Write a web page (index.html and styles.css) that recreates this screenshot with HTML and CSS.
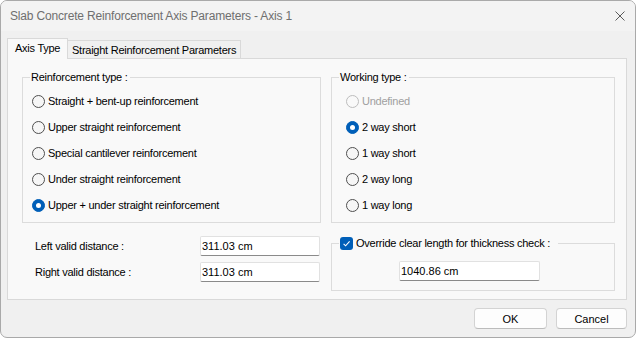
FILE: index.html
```html
<!DOCTYPE html>
<html>
	<head>
		<meta charset="UTF-8">
		<title>Slab Concrete Reinforcement Axis Parameters - Axis 1</title>
		<link rel="stylesheet" href="styles.css">
	</head>
	<body>
		<div class="window">
			<div class="titlebar">
				<span class="title">Slab Concrete Reinforcement Axis Parameters - Axis 1</span>
				<svg class="close" width="10" height="10" viewBox="0 0 10 10"><path d="M0.5 0.5L9.5 9.5M9.5 0.5L0.5 9.5" stroke="#5a5a5a" stroke-width="1" fill="none"/></svg>
			</div>
			<div class="client">
				<div class="tabs">
					<div class="tab active">Axis Type</div>
					<div class="tab">Straight Reinforcement Parameters</div>
				</div>
				<div class="panel">
					<div class="grid">
						<fieldset class="group">
							<legend>Reinforcement type :</legend>
							<div class="options">
								<div class="option"><span class="radio"></span>Straight + bent-up reinforcement</div>
								<div class="option"><span class="radio"></span>Upper straight reinforcement</div>
								<div class="option"><span class="radio"></span>Special cantilever reinforcement</div>
								<div class="option"><span class="radio"></span>Under straight reinforcement</div>
								<div class="option"><span class="radio on"></span>Upper + under straight reinforcement</div>
							</div>
						</fieldset>
						<fieldset class="group work">
							<legend>Working type :</legend>
							<div class="options">
								<div class="option disabled"><span class="radio"></span>Undefined</div>
								<div class="option"><span class="radio on"></span>2 way short</div>
								<div class="option"><span class="radio"></span>1 way short</div>
								<div class="option"><span class="radio"></span>2 way long</div>
								<div class="option"><span class="radio"></span>1 way long</div>
							</div>
						</fieldset>
						<div class="distances">
							<div class="field"><label>Left valid distance :</label><input class="input" type="text" value="311.03 cm"></div>
							<div class="field"><label>Right valid distance :</label><input class="input" type="text" value="311.03 cm"></div>
						</div>
						<fieldset class="group override">
							<legend><span class="check"><svg width="11" height="11" viewBox="0 0 11 11"><path d="M2.6 5.8L4.6 7.8L8.6 3.4" stroke="#fff" stroke-width="1.1" fill="none"/></svg></span>Override clear length for thickness check :</legend>
							<input class="input wide" type="text" value="1040.86 cm">
						</fieldset>
					</div>
				</div>
				<div class="buttons">
					<button class="btn">OK</button>
					<button class="btn cancel">Cancel</button>
				</div>
			</div>
		</div>
	</body>
</html>
```
FILE: styles.css
```css
*{margin: 0;padding: 0;box-sizing: border-box;}
body{background: #fff;color: #000;font: 11px "Liberation Sans", Arial, sans-serif;letter-spacing: -0.25px;}
.window{width: 636px;height: 338px;border: 1px solid #a9a9a9;border-radius: 7px;background: #f0f0f0;overflow: hidden;display: flex;flex-direction: column;}
.titlebar{height: 30px;flex: none;background: #f3f3f3;display: flex;align-items: center;justify-content: space-between;padding: 0 10px 0 9px;}
.title{font-size: 12px;letter-spacing: -0.17px;color: #6f6f6f;}
.client{flex: 1;padding: 7px 8px 0 6px;}
.tabs{display: flex;align-items: flex-end;height: 20px;}
.tab{width: 173px;height: 18px;padding: 2px 0 0 4px;line-height: 14px;white-space: nowrap;background: #f0f0f0;border: 1px solid #d9d9d9;border-left: none;border-bottom: none;}
.tab.active{width: 61px;height: 21px;margin-bottom: -1px;padding-left: 7px;background: #f9f9f9;border-left: 1px solid #d9d9d9;position: relative;z-index: 1;}
.panel{height: 242px;background: #f9f9f9;border: 1px solid #d9d9d9;padding: 11px 0 0 14px;}
.grid{display: grid;grid-template-columns: 299px 284px;column-gap: 10px;row-gap: 13px;align-items: start;}
.group{min-width: 0;border: 1px solid #dcdcdc;padding: 4px 0 4px 7px;}
.group legend{padding: 0 2px 0 1px;line-height: 14px;}
.options{display: flex;flex-direction: column;}
.option{height: 26px;display: flex;align-items: center;gap: 3px;padding-left: 2px;}
.work .option{padding-left: 7px;}
.option.disabled{color: #a0a0a0;}
.radio{flex: none;width: 13px;height: 13px;border: 1px solid #4f4f4f;border-radius: 50%;background: #f6f6f6;position: relative;}
.disabled .radio{border-color: #bdbdbd;background: #f9f9f9;}
.radio.on{background: #005fb8;border-color: #005fb8;}
.radio.on::after{content: "";position: absolute;left: 3px;top: 3px;width: 5px;height: 5px;border-radius: 50%;background: #fff;}
.distances{display: flex;flex-direction: column;gap: 6px;padding-left: 13px;}
.field{height: 20px;display: flex;align-items: center;}
.field label{width: 165px;}
.input{width: 120px;height: 20px;padding: 0 1px;font: inherit;color: #000;background: #fff;border: 1px solid #e1e1e1;border-bottom-color: #8a8a8a;border-radius: 2px;outline: none;}
.override{padding: 11px 0 9px 7px;}
.override legend{display: flex;align-items: center;gap: 3px;padding: 0 8px 0 1px;}
.check{width: 13px;height: 13px;border-radius: 3px;background: #005fb8;display: flex;align-items: center;justify-content: center;}
.input.wide{width: 141px;margin-left: 60px;}
.buttons{display: flex;justify-content: flex-end;gap: 9px;margin-top: 8px;}
.btn{width: 73px;height: 21px;font: inherit;color: #000;background: #fdfdfd;border: 1px solid #d3d3d3;border-bottom-color: #bcbcbc;border-radius: 4px;}
.btn.cancel{width: 71px;}
```
